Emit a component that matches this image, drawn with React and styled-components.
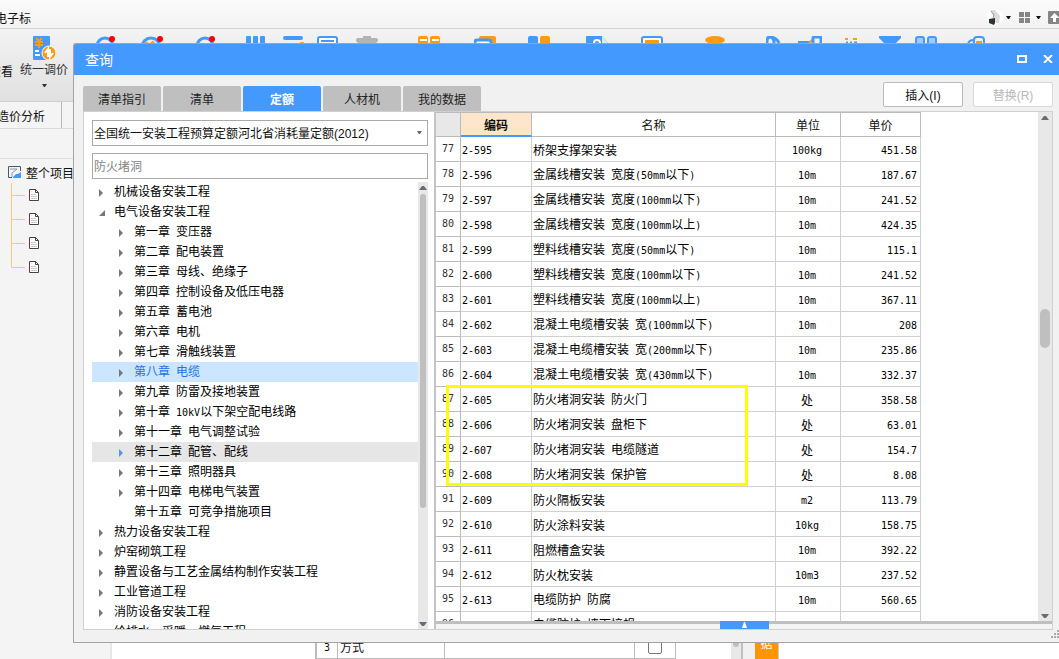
import React, { Fragment, useState } from 'react';
import styled, { createGlobalStyle, css, ThemeProvider } from 'styled-components';

const theme = {
  palette: {
    primary: '#4499ff',
    accent: '#ff9a14',
    line: '#d0d0d0',
    strong: '#bbbbbb',
    surface: '#f1f1f1',
    muted: '#bfbfbf',
    track: '#e8e8e8',
  },
};

const TABS = ['清单指引', '清单', '定额', '人材机', '我的数据'];

const TREE = [
  { name: '机械设备安装工程', depth: 0 },
  { name: '电气设备安装工程', depth: 0, open: true },
  { name: '第一章 变压器', depth: 1 },
  { name: '第二章 配电装置', depth: 1 },
  { name: '第三章 母线、绝缘子', depth: 1 },
  { name: '第四章 控制设备及低压电器', depth: 1 },
  { name: '第五章 蓄电池', depth: 1 },
  { name: '第六章 电机', depth: 1 },
  { name: '第七章 滑触线装置', depth: 1 },
  { name: '第八章 电缆', depth: 1 },
  { name: '第九章 防雷及接地装置', depth: 1 },
  { name: '第十章 10kV以下架空配电线路', depth: 1 },
  { name: '第十一章 电气调整试验', depth: 1 },
  { name: '第十二章 配管、配线', depth: 1, hovered: true },
  { name: '第十三章 照明器具', depth: 1 },
  { name: '第十四章 电梯电气装置', depth: 1 },
  { name: '第十五章 可竞争措施项目', depth: 1, leaf: true },
  { name: '热力设备安装工程', depth: 0 },
  { name: '炉窑砌筑工程', depth: 0 },
  { name: '静置设备与工艺金属结构制作安装工程', depth: 0 },
  { name: '工业管道工程', depth: 0 },
  { name: '消防设备安装工程', depth: 0 },
  { name: '给排水、采暖、燃气工程', depth: 0 },
];

const ROWS = [
  [77, '2-595', '桥架支撑架安装', '100kg', '451.58'],
  [78, '2-596', '金属线槽安装 宽度(50mm以下)', '10m', '187.67'],
  [79, '2-597', '金属线槽安装 宽度(100mm以下)', '10m', '241.52'],
  [80, '2-598', '金属线槽安装 宽度(100mm以上)', '10m', '424.35'],
  [81, '2-599', '塑料线槽安装 宽度(50mm以下)', '10m', '115.1'],
  [82, '2-600', '塑料线槽安装 宽度(100mm以下)', '10m', '241.52'],
  [83, '2-601', '塑料线槽安装 宽度(100mm以上)', '10m', '367.11'],
  [84, '2-602', '混凝土电缆槽安装 宽(100mm以下)', '10m', '208'],
  [85, '2-603', '混凝土电缆槽安装 宽(200mm以下)', '10m', '235.86'],
  [86, '2-604', '混凝土电缆槽安装 宽(430mm以下)', '10m', '332.37'],
  [87, '2-605', '防火堵洞安装 防火门', '处', '358.58'],
  [88, '2-606', '防火堵洞安装 盘柜下', '处', '63.01'],
  [89, '2-607', '防火堵洞安装 电缆隧道', '处', '154.7'],
  [90, '2-608', '防火堵洞安装 保护管', '处', '8.08'],
  [91, '2-609', '防火隔板安装', 'm2', '113.79'],
  [92, '2-610', '防火涂料安装', '10kg', '158.75'],
  [93, '2-611', '阻燃槽盒安装', '10m', '392.22'],
  [94, '2-612', '防火枕安装', '10m3', '237.52'],
  [95, '2-613', '电缆防护 防腐', '10m', '560.65'],
  [96, '', '电缆防护 墙面接规', '', ''],
];

const B = '#4499ff';
const O = '#ff9a14';

// Ribbon tools: slot width and glyph
const TOOLS = [
  [45, <><circle cx="10" cy="10" r="8" fill="none" stroke={B} strokeWidth="3" /><circle cx="17" cy="3" r="3" fill="#f00" /></>],
  [55, <><circle cx="11" cy="11" r="9" fill="none" stroke={B} strokeWidth="3" /><path d="M6 6l3 3 4-3 2 3" stroke={O} strokeWidth="2" fill="none" /><circle cx="20" cy="3" r="3" fill="#f00" /></>],
  [51, <><circle cx="10" cy="10" r="8" fill="none" stroke={B} strokeWidth="3" /><circle cx="17" cy="3" r="3" fill="#f00" /></>],
  [37, <g fill={B}><rect width="5" height="16" rx="1" /><rect x="7" width="5" height="16" rx="1" /><rect x="14" width="5" height="16" rx="1" /></g>],
  [34, <><rect width="20" height="4" rx="2" fill={B} /><rect x="17" y="6" width="4" height="3" rx="1" fill={O} /></>],
  [39, <><rect x="1" y="1" width="19" height="17" rx="2" fill="#fff" stroke={B} strokeWidth="2" /><path d="M4 5h13" stroke={B} strokeWidth="2" /></>],
  [62, <path d="M7 0h8v2h5q2 0 2 2v1l-3 3H3L0 5V4q0-2 2-2h5z" fill="#b3b3b3" />],
  [56, <g fill={O}><rect width="10" height="18" rx="2" /><rect x="12" width="10" height="18" rx="2" /><path d="M2 4h7M14 4h7" stroke="#fff" strokeWidth="2" /></g>],
  [54, <><rect x="5" width="17" height="14" rx="2" fill={O} /><rect x="1" y="4" width="16" height="14" rx="2" fill="#fff" stroke={B} strokeWidth="3" /></>],
  [58, <><rect width="10" height="10" rx="2" fill={B} /><rect x="12" width="10" height="10" rx="2" fill={O} /></>],
  [55, <><path d="M0 1q0-1 1-1h15l6 7v12H0z" fill={B} /><path d="M16 0l6 7h-6z" fill="#d5ecff" /><circle cx="11" cy="7" r="3" fill="none" stroke="#fff" strokeWidth="2" /></>],
  [64, <><rect x="1" y="1" width="20" height="16" rx="2" fill="#fff" stroke={B} strokeWidth="2" /><rect x="4" y="4" width="14" height="9" rx="1" fill={O} /></>],
  [61, <ellipse cx="10" cy="4" rx="10" ry="4" fill={O} />],
  [32, <path d="M1 9V5q0-4 3-4t4 4v4M5 1q6 1 8 6" fill="none" stroke={B} strokeWidth="3" />],
  [46, <><path d="M0 6h12" stroke={B} strokeWidth="2" /><path d="M11 7l3-3" stroke={O} strokeWidth="2" /><rect x="15" y="1" width="8" height="12" rx="1" fill="none" stroke={B} strokeWidth="3" /></>],
  [35, <><path d="M1 3h3M9 3h4" stroke={O} strokeWidth="2" /><path d="M2 7h2M6 7h2M10 7h3" stroke={B} strokeWidth="3" /></>],
  [36, <path d="M0 0h22v2l-8 8H8L0 2z" fill={B} />],
  [52, <g fill="#9ccbff" stroke={B} strokeWidth="2"><rect x="1" y="1" width="8" height="9" rx="2" /><rect x="13" y="1" width="8" height="9" rx="2" /></g>],
  [22, <><path d="M1 7q2-3 5-3M7 10V4q0-3 3-3h4q3 0 3 3v6" fill="none" stroke={B} strokeWidth="2" /><path d="M9 5h6v4H9z" fill={O} /></>],
];

// Runs of ASCII are set in the narrow mono face, half a Chinese glyph wide
const Label = ({ children }) =>
  String(children)
    .split(/([\x20-\x7e]+)/)
    .map((part, i) => (i % 2 ? <Mono key={i}>{part}</Mono> : <Fragment key={i}>{part}</Fragment>));

const Caret = () => (
  <svg width="5" height="3" viewBox="0 0 5 3">
    <path d="M0 0h5L3 3H2z" fill="currentColor" />
  </svg>
);

const TreeArrow = ({ open }) => (
  <svg width="7" height="8" viewBox="0 0 7 8">
    <path d={open ? 'M7 1v6H1z' : 'M1 0v8l4-4z'} fill="currentColor" />
  </svg>
);

const PageIcon = () => (
  <svg width="10" height="12" viewBox="0 0 10 12">
    <path d="M.5.5h6l3 3v8h-9z" fill="#fff" stroke="#444" />
    <path d="M6.500.5v3h3" fill="none" stroke="#444" />
    <path d="M2 5.500h5M2 7.500h6M2 9.500h6" stroke="#ccc" />
  </svg>
);

const ScrollBar = ({ width, top, size }) => (
  <Track $width={width}>
    <svg width="8" height="4" viewBox="0 0 8 4">
      <path d="M0 4h8L5 0H3z" fill="#6b6b78" />
    </svg>
    <Rail>
      <Thumb style={{ top: `${top}%`, height: `${size}%` }} />
    </Rail>
    <svg width="8" height="4" viewBox="0 0 8 4">
      <path d="M0 0h8L5 4H3z" fill="#6b6b78" />
    </svg>
  </Track>
);

const Ribbon = () => (
  <>
    <TopBar>
      <Clipped $width={31}>电子标</Clipped>
      <Account>
        <svg width="16" height="16" viewBox="0 0 16 16">
          <circle cx="8" cy="8" r="8" fill="#fff" />
          <path d="M4 1l4 0 5 6-1 7-3 0-3-7z" fill="#dcdcd8" />
          <path d="M2 10l6-1v5l-1 2-5-2z" fill="#2c3338" />
          <path d="M4 2l3 4-1 3" stroke="#999" fill="none" />
        </svg>
        <Caret />
        <svg width="11" height="11" viewBox="0 0 11 11">
          <path d="M0 0h5v5H0zM6 0h5v5H6zM0 6h5v5H0zM6 6h5v5H6z" fill="#858585" />
        </svg>
        <Caret />
        <svg width="11" height="13" viewBox="0 0 11 13">
          <rect width="13" height="13" rx="1" fill="#858585" />
          <path d="M6.500 2l5 5H8v4H5V7H2z" fill="#fff" />
        </svg>
      </Account>
    </TopBar>
    <ToolBar>
      <Tool>
        <Clipped $width={13}>查看</Clipped>
      </Tool>
      <Tool $main>
        <svg width="23" height="24" viewBox="0 0 23 24">
          <rect width="17" height="24" rx="1" fill={B} />
          <path d="M3 2l3 3 3-3M2 6h8M2 9h8M6 5v7" stroke={O} strokeWidth="2" fill="none" />
          <path d="M2 15h4M2 19h5" stroke="#fff" strokeWidth="2" />
          <circle cx="16" cy="17" r="7" fill={O} stroke="#fff" />
          <path d="M15 21v-8l-3 4M17 13v8l3-4" stroke="#fff" strokeWidth="2" fill="none" />
        </svg>
        <ToolName>统一调价</ToolName>
        <Caret />
      </Tool>
      <ToolGroup>
        {TOOLS.map(([width, glyph], i) => (
          <ToolSlot key={i} $width={width}>
            <svg width="24" height="24" viewBox="0 0 24 24">
              {glyph}
            </svg>
          </ToolSlot>
        ))}
      </ToolGroup>
    </ToolBar>
    <PageTabs>
      <PageTab>
        <Clipped $width={45}>造价分析</Clipped>
      </PageTab>
    </PageTabs>
    <SubBar />
  </>
);

const ProjectTree = () => (
  <ProjectPane>
    <ProjectRoot>
      <svg width="13" height="14" viewBox="0 0 13 14">
        <path d="M12.500 6V1.500H.5v11H4" fill="none" stroke="#445a70" />
        <path d="M2 4h7L4 8v4" fill="none" stroke="#8a9aaa" />
        <path d="M5 12l3-3h2l3-2v6H5z" fill={B} />
      </svg>
      整个项目
    </ProjectRoot>
    <Branches>
      {[0, 1, 2, 3].map(i => (
        <Branch key={i}>
          <PageIcon />
        </Branch>
      ))}
    </Branches>
  </ProjectPane>
);

const QueryTree = () => {
  const [selected, setSelected] = useState('第八章 电缆');

  return (
    <TreePane>
      <Library aria-label="定额库">
        <option>全国统一安装工程预算定额河北省消耗量定额(2012)</option>
      </Library>
      <LibraryCaret>
        <Caret />
      </LibraryCaret>
      <Search aria-label="搜索" placeholder="防火堵洞" />
      <TreeBox>
        <TreeList>
          {TREE.map(({ name, depth, open, leaf, hovered }) => (
            <li key={name}>
              <TreeRow
                $depth={depth}
                $hovered={hovered}
                $selected={name === selected}
                onClick={() => setSelected(name)}
              >
                <Toggle $active={hovered}>{!leaf && <TreeArrow open={open} />}</Toggle>
                <TreeName>
                  <Label>{name}</Label>
                </TreeName>
              </TreeRow>
            </li>
          ))}
        </TreeList>
        <ScrollBar width={10} top={0} size={74} />
      </TreeBox>
    </TreePane>
  );
};

const QuotaTable = () => (
  <GridPane>
    <GridArea>
      <GridView>
        <Grid>
          <colgroup>
            <Col $width={25} />
            <Col $width={71} />
            <Col $width={244} />
            <Col $width={65} />
            <Col $width={80} />
          </colgroup>
          <thead>
            <tr>
              <Head $corner />
              <Head $current>编码</Head>
              <Head>名称</Head>
              <Head>单位</Head>
              <Head>单价</Head>
            </tr>
          </thead>
          <tbody>
            {ROWS.map(([no, code, name, unit, price]) => (
              <tr key={no}>
                <RowNo><Label>{no}</Label></RowNo>
                <Cell><Label>{code}</Label></Cell>
                <Cell><Label>{name}</Label></Cell>
                <Cell $align="center"><Label>{unit}</Label></Cell>
                <Cell $align="right"><Label>{price}</Label></Cell>
              </tr>
            ))}
          </tbody>
        </Grid>
        <Marker />
      </GridView>
      <ScrollBar width={14} top={38} size={8} />
    </GridArea>
    <DrawerBar>
      <DrawerHandle aria-label="展开">
        <svg width="5" height="6" viewBox="0 0 5 6">
          <path d="M2 0h1l2 6H0z" fill="#fff" />
        </svg>
      </DrawerHandle>
    </DrawerBar>
  </GridPane>
);

const QueryDialog = () => {
  const [tab, setTab] = useState('定额');

  return (
    <Dialog role="dialog" aria-label="查询">
      <TitleBar>
        <Title>查询</Title>
        <WindowButton aria-label="最大化">
          <svg width="10" height="8" viewBox="0 0 10 8">
            <path d="M1 1h8v6H1z" fill="none" stroke="#fff" strokeWidth="2" />
          </svg>
        </WindowButton>
        <WindowButton aria-label="关闭">
          <svg width="10" height="8" viewBox="0 0 10 8">
            <path d="M1 0l8 8M9 0L1 8" stroke="#fff" strokeWidth="2" />
          </svg>
        </WindowButton>
      </TitleBar>
      <TabBar>
        {TABS.map(name => (
          <Tab key={name} $active={name === tab} onClick={() => setTab(name)}>
            {name}
          </Tab>
        ))}
        <Actions>
          <Action>插入(I)</Action>
          <Action disabled>替换(R)</Action>
        </Actions>
      </TabBar>
      <Content>
        <QueryTree />
        <QuotaTable />
      </Content>
      <StatusBar>
        <svg width="8" height="8" viewBox="0 0 8 8">
          <path d="M6 0h2v2H6zM3 3h2v2H3zM6 3h2v2H6zM0 6h2v2H0zM3 6h2v2H3zM6 6h2v2H6z" fill="#aaa" />
        </svg>
      </StatusBar>
    </Dialog>
  );
};

const App = () => (
  <ThemeProvider theme={theme}>
    <GlobalStyle />
    <Desktop>
      <Ribbon />
      <Workspace>
        <ProjectTree />
        <Sheet>
          <SheetTable>
            <tbody>
              <tr>
                <SheetCell $width={21} $center><Label>3</Label></SheetCell>
                <SheetCell $width={107}>方式</SheetCell>
                <SheetCell $width={190} />
                <SheetCell $width={41} $center>
                  <Check aria-label="选中" />
                </SheetCell>
              </tr>
            </tbody>
          </SheetTable>
          <SheetScroll>
            <SheetKnob />
          </SheetScroll>
          <SideTag>据</SideTag>
        </Sheet>
      </Workspace>
      <QueryDialog />
    </Desktop>
  </ThemeProvider>
);

export default App;

// Component Styles
const GlobalStyle = createGlobalStyle`
  * {
    box-sizing: border-box;
  }
  body {
    margin: 0;
    overflow: hidden;
  }
  body, button, input, select {
    font-family: "Liberation Sans", "Noto Sans CJK SC", sans-serif;
    font-size: 12px;
    color: #111;
  }
  button {
    padding: 0;
    border: 0;
    background: none;
  }
  svg {
    display: block;
    flex: none;
  }
`;

const Mono = styled.span`
  font-family: 'DejaVu Sans Mono', monospace;
  font-size: 10px;
`;

const Desktop = styled.div`
  position: relative;
  display: flex;
  flex-direction: column;
  height: 100vh;
  overflow: hidden;
  background: #f4f4f4;
`;

const Clipped = styled.span`
  display: flex;
  justify-content: flex-end;
  width: ${({ $width }) => $width}px;
  overflow: hidden;
  white-space: nowrap;
`;

const TopBar = styled.header`
  display: flex;
  align-items: center;
  justify-content: space-between;
  height: 29px;
  padding-top: 6px;
  border-bottom: 1px solid #d4d4d4;
  background: linear-gradient(#fbfbfb, #f3f3f3);
`;

const Account = styled.div`
  display: grid;
  grid-template-columns: 19px 13px 17px 12px 11px;
  align-items: center;
`;

const ToolBar = styled.div`
  display: flex;
  height: 73px;
  padding-top: 7px;
  border-bottom: 1px solid #d0d0d0;
  background: linear-gradient(#f3f3f3, #e0e0e0);
`;

const Tool = styled.div`
  display: flex;
  flex-direction: column;
  align-items: center;
  justify-content: center;
  padding-top: 4px;
  ${({ $main }) =>
    $main &&
    css`
      justify-content: flex-start;
      width: 62px;
      padding-top: 0;
      color: #333;
    `};
`;

const ToolName = styled.span`
  padding-bottom: 4px;
  line-height: 20px;
`;

const ToolGroup = styled.div`
  display: flex;
  margin-left: 20px;
`;

const ToolSlot = styled.div`
  flex: none;
  width: ${({ $width }) => $width}px;
`;

const PageTabs = styled.div`
  display: flex;
  height: 27px;
  border-bottom: 1px solid #d8d8d8;
`;

const PageTab = styled.div`
  display: flex;
  align-items: center;
  width: 62px;
  border-right: 1px solid #b8b8b8;
`;

const SubBar = styled.div`
  height: 30px;
  border-bottom: 1px solid #dedede;
`;

const Workspace = styled.div`
  display: flex;
  flex: 1;
  min-height: 0;
`;

const ProjectPane = styled.aside`
  width: 112px;
  border-right: 2px solid #e6e6e6;
`;

const ProjectRoot = styled.div`
  display: flex;
  align-items: center;
  gap: 5px;
  height: 24px;
  padding: 2px 0 0 8px;
`;

const Branches = styled.ul`
  margin: 0;
  padding: 0 0 0 11px;
  list-style: none;
`;

const Branch = styled.li`
  display: flex;
  align-items: center;
  gap: 4px;
  height: 24px;
  &::before {
    content: '';
    width: 13px;
    height: 24px;
    border-left: 1px solid #ffc978;
    background: linear-gradient(#ffc978, #ffc978) 0 12px / 13px 1px no-repeat;
  }
  &:last-child::before {
    height: 13px;
    margin-bottom: 11px;
  }
`;

const Sheet = styled.main`
  display: flex;
  flex: 1;
  align-items: flex-end;
  padding-left: 203px;
  background: #fff;
`;

const SheetTable = styled.table`
  table-layout: fixed;
  width: 361px;
  height: 24px;
  border-left: 2px solid ${({ theme: { palette } }) => palette.strong};
  border-spacing: 0;
`;

const SheetCell = styled.td`
  width: ${({ $width }) => $width}px;
  height: 24px;
  padding: 0 2px;
  text-align: ${({ $center }) => ($center ? 'center' : 'left')};
  border-right: 1px solid ${({ theme: { palette } }) => palette.strong};
  border-bottom: 1px solid ${({ theme: { palette } }) => palette.strong};
`;

const Check = styled.input.attrs({ type: 'checkbox' })`
  appearance: none;
  display: block;
  width: 14px;
  height: 14px;
  margin: 0 auto;
  border: 1px solid #777;
  border-radius: 2px;
  background: #fff;
`;

const SheetScroll = styled.div`
  display: flex;
  flex-direction: column;
  justify-content: flex-end;
  align-items: center;
  width: 12px;
  height: 100%;
  margin-left: 55px;
  padding-bottom: 12px;
  border-right: 2px solid ${({ theme: { palette } }) => palette.muted};
  background: ${({ theme: { palette } }) => palette.track};
`;

const SheetKnob = styled.div`
  width: 6px;
  height: 40px;
  border-radius: 3px;
  background: ${({ theme: { palette } }) => palette.muted};
`;

const SideTag = styled.div`
  width: 36px;
  height: 27px;
  line-height: 24px;
  text-align: center;
  color: #fff;
  border-left: 12px solid #f1f1f1;
  border-right: 1px solid #ccc;
  background: #ff9500;
`;

const Dialog = styled.section`
  position: absolute;
  top: 43px;
  right: 0;
  bottom: 16px;
  left: 73px;
  display: flex;
  flex-direction: column;
  border: 1px solid #a4a4a4;
  border-right: 0;
  border-top-left-radius: 3px;
  background: ${({ theme: { palette } }) => palette.surface};
`;

const TitleBar = styled.header`
  display: flex;
  flex: none;
  align-items: center;
  gap: 16px;
  height: 31px;
  padding: 0 6px 2px 11px;
  border-top-left-radius: 2px;
  background: ${({ theme: { palette } }) => palette.primary};
`;

const Title = styled.h1`
  flex: 1;
  margin: 0;
  font-size: 14px;
  font-weight: 400;
  color: #fff;
`;

const WindowButton = styled.button`
  width: 10px;
  height: 20px;
`;

const TabBar = styled.nav`
  display: flex;
  flex: none;
  align-items: flex-end;
  gap: 2px;
  height: 36px;
  padding: 0 6px 0 9px;
`;

const Tab = styled.button`
  width: 78px;
  height: 25px;
  border-radius: 2px 2px 0 0;
  background: ${({ $active, theme: { palette } }) => ($active ? palette.primary : palette.muted)};
  color: ${({ $active }) => ($active ? '#fff' : '#222')};
  font-weight: ${({ $active }) => ($active ? 700 : 400)};
`;

const Actions = styled.div`
  display: flex;
  gap: 10px;
  margin-left: auto;
  padding-bottom: 4px;
`;

const Action = styled.button`
  width: 80px;
  height: 25px;
  border: 1px solid #bbb;
  border-radius: 2px;
  background: #fff;
  &:disabled {
    border-color: #d8d8d8;
    color: #b8b8b8;
  }
`;

const Content = styled.div`
  display: flex;
  flex: 1;
  min-height: 0;
  margin: 0 6px 0 9px;
  border: 1px solid ${({ theme: { palette } }) => palette.line};
  background: #fff;
`;

const StatusBar = styled.footer`
  display: flex;
  flex: none;
  justify-content: flex-end;
  height: 12px;
`;

const TreePane = styled.div`
  position: relative;
  display: flex;
  flex: none;
  flex-direction: column;
  width: 350px;
  padding: 8px 6px 0 8px;
`;

const field = css`
  flex: none;
  width: 100%;
  height: 26px;
  margin: 0;
  padding: 2px 1px 0;
  border: 1px solid #aaa;
  border-radius: 0;
  background: #fff;
`;

const Library = styled.select`
  ${field};
  appearance: none;
`;

const LibraryCaret = styled.span`
  position: absolute;
  top: 19px;
  right: 12px;
  color: #666;
  pointer-events: none;
`;

const Search = styled.input`
  ${field};
  margin: 7px 0 3px;
  &::placeholder {
    color: #858585;
  }
`;

const TreeBox = styled.div`
  display: flex;
  flex: 1;
  min-height: 0;
`;

const TreeList = styled.ul`
  flex: 1;
  margin: 0;
  padding: 0;
  overflow: hidden;
  list-style: none;
`;

const TreeRow = styled.button`
  display: flex;
  align-items: center;
  width: 100%;
  height: 20px;
  padding-left: ${({ $depth }) => 6 + $depth * 20}px;
  line-height: 20px;
  text-align: left;
  white-space: nowrap;
  color: ${({ $selected }) => ($selected ? '#1a73e8' : '#000')};
  background: ${({ $selected, $hovered }) => ($selected ? '#cce6ff' : $hovered ? '#e6e6e6' : '#fff')};
`;

const Toggle = styled.span`
  width: 16px;
  padding-top: 1px;
  color: ${({ $active, theme: { palette } }) => ($active ? palette.primary : '#777')};
`;

const TreeName = styled.span`
  white-space: pre;
`;

const Track = styled.div`
  display: flex;
  flex: none;
  flex-direction: column;
  align-items: center;
  width: ${({ $width }) => $width}px;
  padding: 4px 0 3px;
  background: ${({ theme: { palette } }) => palette.track};
`;

const Rail = styled.div`
  position: relative;
  flex: 1;
  align-self: stretch;
  margin: 4px 2px;
`;

const Thumb = styled.div`
  position: absolute;
  right: 0;
  left: 0;
  border-radius: 5px;
  background: ${({ theme: { palette } }) => palette.muted};
`;

const GridPane = styled.div`
  display: flex;
  flex: 1;
  flex-direction: column;
  min-width: 0;
  border-left: 2px solid #c4c4c4;
`;

const GridArea = styled.div`
  display: flex;
  flex: 1;
  min-height: 0;
`;

const GridView = styled.div`
  position: relative;
  flex: 1;
  overflow: hidden;
`;

const Grid = styled.table`
  table-layout: fixed;
  width: 485px;
  border-spacing: 0;
`;

const Col = styled.col`
  width: ${({ $width }) => $width}px;
`;

const Head = styled.th`
  height: 25px;
  padding: 0;
  font-weight: ${({ $current }) => ($current ? 700 : 400)};
  border: 1px solid ${({ theme: { palette } }) => palette.strong};
  border-left: 0;
  background: ${({ $current, $corner }) => ($current ? '#ffe6cb' : $corner ? '#e8e8e8' : '#fff')};
  ${({ $current, theme: { palette } }) => $current && `border-bottom: 2px solid ${palette.primary}`};
`;

const Cell = styled.td`
  height: 25px;
  padding: 3px 3px 0 1px;
  line-height: 20px;
  white-space: pre;
  text-align: ${({ $align = 'left' }) => $align};
  color: #000;
  border-right: 1px solid ${({ theme: { palette } }) => palette.line};
  border-bottom: 1px solid ${({ theme: { palette } }) => palette.line};
`;

const RowNo = styled(Cell)`
  padding: 0 0 2px;
  text-align: center;
  color: #333;
  border-color: ${({ theme: { palette } }) => palette.strong};
`;

// Highlight frame around the fire-stopping rows
const Marker = styled.div`
  position: absolute;
  top: 273px;
  left: 10px;
  width: 302px;
  height: 101px;
  border: 3px solid #ffff00;
  pointer-events: none;
`;

const DrawerBar = styled.div`
  display: flex;
  flex: none;
  justify-content: center;
  height: 8px;
  background: linear-gradient(#bfbfbf 3px, #f4f4f4 3px);
`;

const DrawerHandle = styled.button`
  display: flex;
  align-items: center;
  justify-content: center;
  width: 49px;
  height: 8px;
  background: ${({ theme: { palette } }) => palette.primary};
`;
